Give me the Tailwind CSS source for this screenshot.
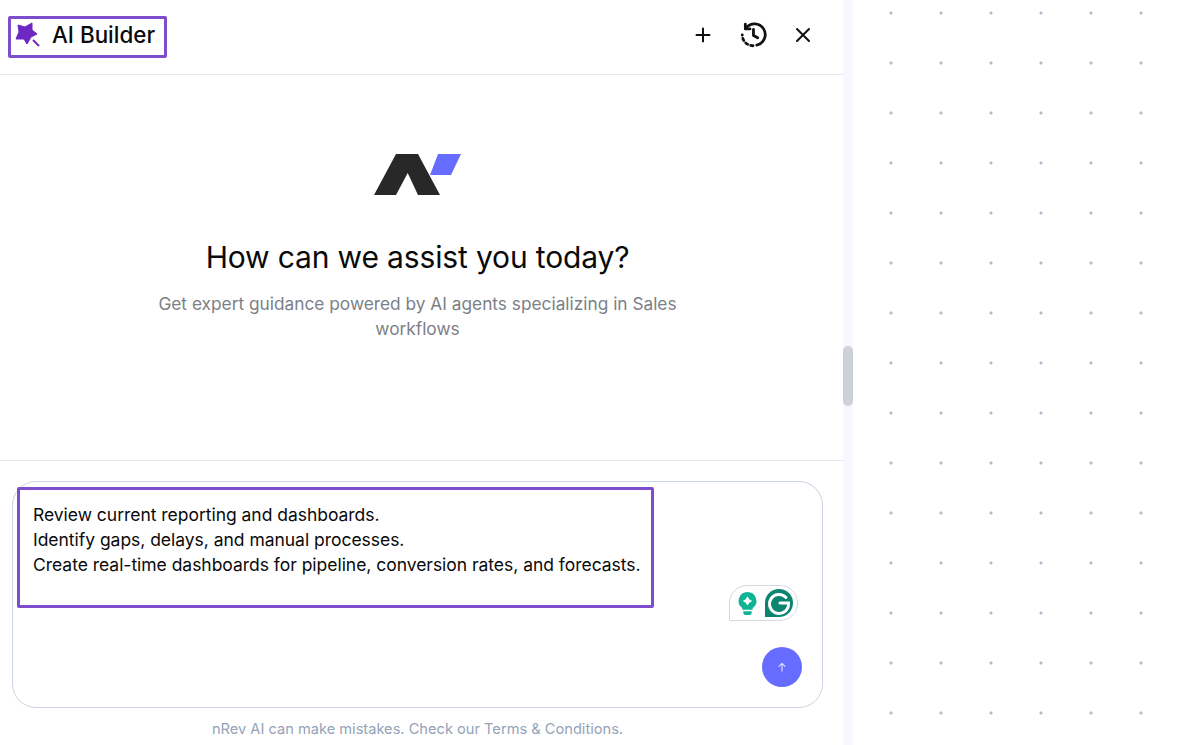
<!DOCTYPE html>
<html>
<head>
  <meta charset="UTF-8">
  <script src="https://cdn.jsdelivr.net/npm/@tailwindcss/browser@4"></script>
  <title>AI Builder</title>
</head>
<body class="h-screen overflow-hidden bg-white font-['Inter',sans-serif] text-black">
<div class="flex h-[745px]">

  <!-- Chat panel -->
  <div class="w-[843px] h-full flex flex-col bg-white">

    <!-- Header -->
    <div class="h-[75px] shrink-0 border-b border-[#e5e7eb] flex items-center justify-between pl-[15px] pr-[27px] pb-[5px] relative">
      <div class="flex items-center gap-[11px]">
        <svg width="26" height="26" viewBox="0 0 26 26" class="text-[#6f27c4]">
          <path fill="currentColor" stroke="currentColor" stroke-width="1" stroke-linejoin="round" d="M3 3l7 2 7-4v7l5 4-6 3-4 7-3-5H1l3-7z"/>
          <path stroke="currentColor" stroke-width="2" d="M18 18l6 6"/>
        </svg>
        <span class="text-[22.400px] leading-[30px] font-medium text-[#0a0a0a]">AI Builder</span>
      </div>
      <div class="flex items-center gap-[23px] text-[#111]">
        <svg width="26" height="26" viewBox="0 0 26 26" fill="none" stroke="currentColor" stroke-width="2" stroke-linecap="round"><path d="M13 6.500v13M6.500 13h13"/></svg>
        <svg width="28" height="28" viewBox="0 0 30 30" fill="none" stroke="currentColor" stroke-width="3" stroke-linecap="round" stroke-linejoin="round">
          <path d="M7.500 7.500A11.500 11.500 0 1 1 19 25.800"/>
          <path d="M6.800 3.500v5h5"/>
          <path d="M15.500 9v6.500l4.500 2.500"/>
          <path stroke-dasharray="2.500 3.400" d="M15 26.500A11.500 11.500 0 0 1 3.500 15"/>
        </svg>
        <svg width="26" height="26" viewBox="0 0 26 26" fill="none" stroke="currentColor" stroke-width="2" stroke-linecap="round"><path d="M7 7l12 12M19 7L7 19"/></svg>
      </div>
      <!-- highlight -->
      <div class="absolute left-[8px] top-[16px] w-[159px] h-[42px] border-[3px] border-[#7e4dcb] rounded-[2px]"></div>
    </div>

    <!-- Welcome -->
    <div class="h-[385px] w-[835px] shrink-0 flex flex-col items-center pt-[79px]">
      <svg width="88" height="42" viewBox="0 0 88 42">
        <path fill="#282828" d="M22 0h22l22 41H44L33.700 19 22 41H0z"/>
        <path fill="#666cff" d="M64 0h23L77 21H56z"/>
      </svg>
      <h1 class="mt-[41px] text-[30px] leading-[40px] font-normal tracking-[-0.150px] text-[#0a0a0a]">How can we assist you today?</h1>
      <p class="mt-[14px] w-[560px] text-center text-[17.300px] leading-[25px] text-[#7b7f87]">Get expert guidance powered by AI agents specializing in Sales workflows</p>
    </div>

    <!-- Composer -->
    <div class="flex-1 border-t border-[#e5e7eb] px-[12px] pt-[20px] relative">
      <div class="h-[227px] w-[811px] border border-[#cbd5e1] rounded-[24px] relative pl-[20px] pt-[20px]">
        <div class="text-[17.500px] leading-[25px] tracking-[-0.030px] text-[#0a0a0a]">
          <div>Review current reporting and dashboards.</div>
          <div>Identify gaps, delays, and manual processes.</div>
          <div>Create real-time dashboards for pipeline, conversion rates, and forecasts.</div>
        </div>
        <!-- highlight -->
        <div class="absolute left-[4px] top-[5px] w-[637px] h-[121px] border-[3px] border-[#7e4dcb] rounded-[2px]"></div>
        <!-- grammarly -->
        <div class="absolute left-[716px] top-[103px] w-[69px] h-[36px] border border-[#d5d9e2] rounded-[18px] rounded-bl-none bg-white flex items-center gap-[8px] pl-[8px]">
          <svg width="19" height="25" viewBox="0 0 18 24">
            <path fill="#10b395" d="M9 1a8.500 8.500 0 0 1 5 15.400V18H4v-1.600A8.500 8.500 0 0 1 9 1zM5 19.500h8V21a2 2 0 0 1-2 2H7a2 2 0 0 1-2-2z"/>
            <path fill="#fff" d="M9 5l1.700 2.800L13.500 9.500l-2.800 1.700L9 14l-1.700-2.800L4.500 9.500l2.800-1.700z"/>
          </svg>
          <svg width="28" height="28" viewBox="0 0 28 28">
            <path fill="#0b8570" d="M14 0a14 14 0 0 1 0 28H0V14A14 14 0 0 1 14 0z"/>
            <path fill="none" stroke="#fff" stroke-width="3" stroke-linecap="round" d="M21 8.500A9.500 9.500 0 1 0 23.500 14H15"/>
          </svg>
        </div>
        <!-- send -->
        <button class="absolute left-[749px] top-[165px] w-[40px] h-[40px] rounded-full bg-[#666cff] flex items-center justify-center">
          <svg width="10" height="10" viewBox="0 0 10 10" fill="none" stroke="#d9dbff" stroke-width="1.200" stroke-linecap="round" stroke-linejoin="round"><path d="M5 9V1.500M2 4.300L5 1.300l3 3"/></svg>
        </button>
      </div>
      <p class="mt-[11px] text-center w-[811px] text-[14.640px] leading-[20px] text-[#94a3b8]">nRev AI can make mistakes. Check our Terms &amp; Conditions.</p>
    </div>
  </div>

  <!-- Scrollbar -->
  <div class="w-[10px] h-full bg-[#f7f7fd] pt-[346px]">
    <div class="w-[10px] h-[60px] rounded-full bg-[#cdd1d8]"></div>
  </div>

  <!-- Canvas with dots -->
  <div class="flex-1 h-full bg-white bg-[radial-gradient(circle,#b4bbcf_1.200px,transparent_1.900px)] bg-[size:50px_50px] bg-[position:13px_-12px]"></div>
</div>
</body>
</html>
